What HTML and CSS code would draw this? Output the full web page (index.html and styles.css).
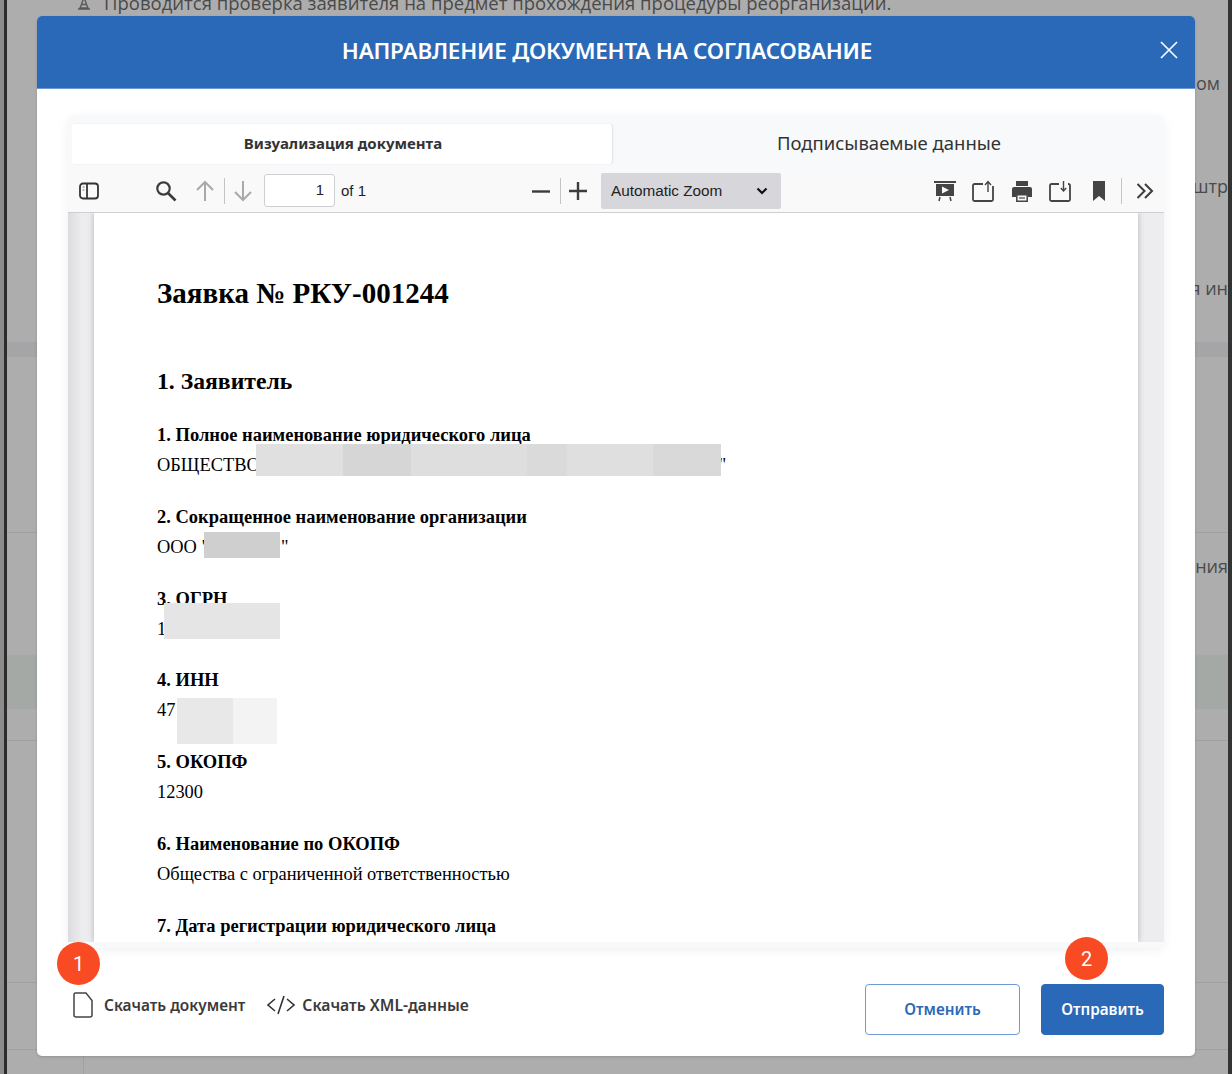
FILE: index.html
```html
<!DOCTYPE html>
<html lang="ru">
<head>
    <meta charset="UTF-8">
    <title>Направление документа на согласование</title>
    <link rel="stylesheet" href="styles.css">
</head>
<body>

    <!-- Страница под модальным окном -->
    <div class="backdrop">
        <div class="notice">
            <svg class="notice-icon" viewBox="0 0 16 16" width="16" height="16"><path d="M4 14h8l-1.500-3.500h-5zM5.500 10.500L8 3l2.500 7.500M2 15h12" fill="none" stroke="#5a5a5a" stroke-width="1.400"/></svg>
            <span>Проводится проверка заявителя на предмет прохождения процедуры реорганизации.</span>
        </div>
        <div class="bg-row bg-row-1">ом</div>
        <div class="bg-row bg-row-2">штр</div>
        <div class="bg-row bg-row-3">я ин</div>
        <div class="bg-band"></div>
        <div class="bg-row bg-row-4">ния</div>
        <div class="bg-green"></div>
        <div class="bg-line bg-line-1"></div>
        <div class="bg-line bg-line-2"></div>
        <div class="bg-line bg-line-3"></div>
        <div class="bg-foot"></div>
    </div>

    <div class="modal">
        <div class="modal-header">
            <h1>НАПРАВЛЕНИЕ ДОКУМЕНТА НА СОГЛАСОВАНИЕ</h1>
            <svg class="close-icon" viewBox="0 0 18 18" width="18" height="18"><path d="M1 1l16 16M17 1L1 17" stroke="#fff" stroke-width="1.700" fill="none"/></svg>
        </div>

        <div class="viewer-card">
            <div class="tabs">
                <div class="tab tab-active">Визуализация документа</div>
                <div class="tab">Подписываемые данные</div>
            </div>

            <div class="toolbar">
                <svg class="tool tool-sidebar" viewBox="0 0 20 18" width="20" height="18"><rect x="1" y="1.500" width="18" height="15" rx="3" fill="none" stroke="#333" stroke-width="1.800"/><path d="M8 1.500v15" stroke="#333" stroke-width="1.800"/><path d="M3.500 5h2M3.500 8h2" stroke="#777" stroke-width="1.200"/></svg>
                <svg class="tool tool-search" viewBox="0 0 22 22" width="22" height="22"><circle cx="8.500" cy="8.500" r="6.200" fill="none" stroke="#3c3c3c" stroke-width="2.200"/><path d="M13 13l7.500 7.500" stroke="#3c3c3c" stroke-width="2.600"/></svg>
                <svg class="tool tool-up" viewBox="0 0 20 22" width="20" height="22"><path d="M10 21V2M2 10l8-8 8 8" fill="none" stroke="#a9a9ab" stroke-width="2"/></svg>
                <span class="tool-sep sep-nav"></span>
                <svg class="tool tool-down" viewBox="0 0 20 22" width="20" height="22"><path d="M10 1v19M2 12l8 8 8-8" fill="none" stroke="#a9a9ab" stroke-width="2"/></svg>
                <div class="page-input">1</div>
                <span class="page-total">of 1</span>

                <svg class="tool tool-minus" viewBox="0 0 18 18" width="18" height="18"><path d="M0 9.500h18" stroke="#3c3c3c" stroke-width="2.400"/></svg>
                <span class="tool-sep sep-zoom"></span>
                <svg class="tool tool-plus" viewBox="0 0 18 18" width="18" height="18"><path d="M0 9h18M9 0v18" stroke="#3c3c3c" stroke-width="2.400"/></svg>
                <div class="zoom-select">
                    <span>Automatic Zoom</span>
                    <svg viewBox="0 0 12 8" width="12" height="8"><path d="M1.500 1.500L6 6l4.500-4.500" fill="none" stroke="#111" stroke-width="2.200"/></svg>
                </div>

                <svg class="tool tool-present" viewBox="0 0 22 22" width="22" height="22"><path d="M0 2h22" stroke="#444" stroke-width="2"/><path d="M2 4h18v12H2z" fill="#444"/><path d="M8 6.500l7 3.500-7 3.500z" fill="#f9f9fa"/><path d="M6 17l-1 4M16 17l1 4" stroke="#444" stroke-width="1.500"/></svg>
                <svg class="tool tool-open" viewBox="0 0 22 22" width="22" height="22"><path d="M11 4H2.500A1.500 1.500 0 0 0 1 5.500v14A1.500 1.500 0 0 0 2.500 21h17a1.500 1.500 0 0 0 1.500-1.500V6" fill="none" stroke="#444" stroke-width="1.800"/><path d="M16 12V2M13 5l3-3.500L19 5" fill="none" stroke="#444" stroke-width="1.400"/></svg>
                <svg class="tool tool-print" viewBox="0 0 22 22" width="22" height="22"><path d="M5 6V1h12v5M5 17H1V9a2 2 0 0 1 2-2h16a2 2 0 0 1 2 2v8h-4v-3H5z" fill="#444"/><path d="M5.800 14.800h10.400v6.400H5.800z" fill="none" stroke="#444" stroke-width="1.500"/><path d="M8 18h6" stroke="#444" stroke-width="1.200"/></svg>
                <svg class="tool tool-save" viewBox="0 0 22 22" width="22" height="22"><path d="M10 4H2.500A1.500 1.500 0 0 0 1 5.500v14A1.500 1.500 0 0 0 2.500 21h17a1.500 1.500 0 0 0 1.500-1.500V5.500A1.500 1.500 0 0 0 19.500 4H19" fill="none" stroke="#444" stroke-width="1.800"/><path d="M14.500 1v10M11.800 8l2.700 3 2.700-3" fill="none" stroke="#444" stroke-width="1.400"/></svg>
                <svg class="tool tool-mark" viewBox="0 0 12 20" width="12" height="20"><path d="M0 0h12v20l-6-5-6 5z" fill="#444"/></svg>
                <span class="tool-sep sep-more"></span>
                <svg class="tool tool-more" viewBox="0 0 18 16" width="18" height="16"><path d="M1.500 1l7 7-7 7M9 1l7 7-7 7" fill="none" stroke="#3c3c3c" stroke-width="2"/></svg>
            </div>

            <div class="viewer-body">
                <div class="doc-page">
                    <h2>Заявка № РКУ-001244</h2>
                    <h3>1. Заявитель</h3>
                    <div class="field"><b>1. Полное наименование юридического лица</b><p>ОБЩЕСТВО<span class="gap gap-name"></span>"</p></div>
                    <div class="field"><b>2. Сокращенное наименование организации</b><p>ООО "<span class="gap gap-short"></span>"</p></div>
                    <div class="field"><b>3. ОГРН</b><p>1</p></div>
                    <div class="field"><b>4. ИНН</b><p>47</p></div>
                    <div class="field"><b>5. ОКОПФ</b><p>12300</p></div>
                    <div class="field"><b>6. Наименование по ОКОПФ</b><p>Общества с ограниченной ответственностью</p></div>
                    <div class="field"><b>7. Дата регистрации юридического лица</b></div>

                    <!-- Закрашенные данные -->
                    <div class="mask mask-name">
                        <i class="m1"></i><i class="m2"></i><i class="m3"></i><i class="m4"></i><i class="m5"></i><i class="m6"></i>
                    </div>
                    <div class="mask mask-short"></div>
                    <div class="mask mask-ogrn"></div>
                    <div class="mask mask-inn"><i class="m7"></i><i class="m8"></i></div>
                </div>
            </div>
        </div>

        <div class="modal-footer">
            <a class="link">
                <svg viewBox="0 0 20 26" width="20" height="26"><path d="M2.500 1H13l6 7.500V23a2 2 0 0 1-2 2H3a2 2 0 0 1-2-2V2.500A1.500 1.500 0 0 1 2.500 1z" fill="none" stroke="#444" stroke-width="1.500"/></svg>
                Скачать документ
            </a>
            <a class="link link-xml">
                <svg viewBox="0 0 28 20" width="28" height="20"><path d="M8 4l-7 6 7 6M20 4l7 6-7 6M11 19l6-18" fill="none" stroke="#333" stroke-width="1.600"/></svg>
                Скачать XML-данные
            </a>
            <button class="btn btn-cancel">Отменить</button>
            <button class="btn btn-send">Отправить</button>
        </div>

        <div class="badge badge-one">1</div>
        <div class="badge badge-two">2</div>
    </div>

</body>
</html>
```
FILE: styles.css
```css
/* Общее */
html, body {
    margin: 0;
    height: 1074px;
    overflow: hidden;
}

body {
    background: #8c8c8c;
    font-family: "Open Sans", sans-serif;
}

/* Страница под окном */
.backdrop {
    height: 1074px;
    margin-left: 4px;
    box-sizing: border-box;
    overflow: hidden;
    border-left: 3px solid #2c2c2c;
    border-right: 4px solid #333;
    background: #adadad;
    color: #4a4a4a;
}

.notice {
    display: flex;
    align-items: center;
    gap: 12px;
    height: 16px;
    margin-top: -6px;
    padding-left: 69px;
    font-size: 18.500px;
    white-space: nowrap;
}

.notice-icon {
    flex: none;
}

.bg-row {
    text-align: right;
    font-size: 18px;
    line-height: 24px;
    white-space: nowrap;
}

.bg-row-1 { margin-top: 61px; padding-right: 8px; }
.bg-row-2 { margin-top: 79px; }
.bg-row-3 { margin-top: 78px; }
.bg-row-4 { margin-top: 22px; border-top: 1px solid #a0a0a0; padding-top: 21px; }

.bg-band {
    height: 15px;
    margin-top: 42px;
    margin-bottom: 175px;
    background: #a5a5a7;
}

.bg-green {
    height: 54px;
    margin-top: 77px;
    background: #a4a9a6;
}

.bg-line {
    height: 1px;
    background: #a0a0a0;
}

.bg-line-1 { margin-top: 31px; }
.bg-line-2 { margin-top: 241px; }
.bg-line-3 { margin-top: 66px; }

.bg-foot {
    height: 30px;
    margin-left: 76px;
    border-left: 1px solid #a0a0a0;
}

/* Модальное окно */
.modal {
    position: absolute;
    top: 16px;
    left: 37px;
    width: 1158px;
    height: 1040px;
    display: flex;
    flex-direction: column;
    background: #fff;
    border-radius: 5px;
    box-shadow: 0 1px 3px rgba(0, 0, 0, 0.15);
}

.modal-header {
    position: relative;
    flex: none;
    height: 73px;
    padding-right: 18px;
    display: flex;
    align-items: center;
    justify-content: center;
    background: #2a69b8;
    border-radius: 5px 5px 0 0;
    border-bottom: 1px solid #6b9ad6;
    box-sizing: border-box;
}

.modal-header h1 {
    margin: 0;
    color: #fff;
    font-family: "Noto Sans", sans-serif;
    font-size: 22.400px;
    font-weight: 600;
    letter-spacing: -0.200px;
    transform: translateY(-2px);
}

.close-icon {
    position: absolute;
    top: 25px;
    right: 17px;
}

/* Просмотр документа */
.viewer-card {
    flex: none;
    width: 1096px;
    height: 832px;
    margin: 27px 0 0 31px;
    background: #f8f9fb;
    border-radius: 6px;
    box-shadow: 0 2px 12px rgba(0, 0, 0, 0.06);
    display: flex;
    flex-direction: column;
}

.tabs {
    flex: none;
    display: flex;
    height: 40px;
    margin-top: 8px;
    padding-left: 4px;
}

.tab {
    flex: 1;
    display: flex;
    align-items: center;
    justify-content: center;
    padding: 0 0 3px 2px;
    color: #333;
    font-family: "Noto Sans", sans-serif;
    font-size: 18.500px;
}

.tab-active {
    flex: none;
    width: 540px;
    background: #fff;
    border-radius: 3px;
    box-shadow: 1px 0 2px rgba(0, 0, 0, 0.1);
    box-sizing: border-box;
    font-size: 15px;
    font-weight: 700;
}

.toolbar {
    flex: none;
    height: 44px;
    margin-top: 5px;
    box-sizing: border-box;
    display: flex;
    align-items: center;
    background: #f9f9fa;
    border-bottom: 1px solid #cfcfd1;
    font-family: "Liberation Sans", Arial, sans-serif;
    font-size: 15px;
    color: #222;
}

.tool {
    flex: none;
}

.tool-sep {
    flex: none;
    width: 1px;
    height: 26px;
    background: #c4c4c6;
}

.tool-sidebar { margin-left: 11px; }
.tool-search { margin-left: 56px; }
.tool-up { margin-left: 18px; }
.sep-nav { margin-left: 9px; }
.tool-down { margin-left: 8px; }

.page-input {
    width: 71px;
    height: 33px;
    margin-left: 11px;
    padding-right: 10px;
    box-sizing: border-box;
    background: #fff;
    border: 1px solid #cfcfd1;
    border-radius: 3px;
    text-align: right;
    line-height: 30px;
}

.page-total {
    width: 30px;
    margin-left: 6px;
}

.tool-minus { margin-left: 161px; }
.sep-zoom { margin-left: 10px; }
.tool-plus { margin-left: 8px; }

.zoom-select {
    width: 180px;
    height: 36px;
    margin-left: 14px;
    padding: 0 13px 0 10px;
    box-sizing: border-box;
    display: flex;
    align-items: center;
    justify-content: space-between;
    background: #d7d7db;
    border-radius: 2px;
    font-size: 15.300px;
}

.tool-present { margin-left: 153px; }
.tool-open { margin-left: 16px; }
.tool-print { margin-left: 17px; }
.tool-save { margin-left: 16px; }
.tool-mark { margin-left: 22px; }
.sep-more { margin-left: 16px; }
.tool-more { margin-left: 14px; }

.viewer-body {
    flex: none;
    height: 729px;
    padding: 0 26px;
    overflow: hidden;
    background: linear-gradient(90deg, #dcdcde, #ededf0 14px);
}

/* Страница PDF */
.doc-page {
    position: relative;
    height: 729px;
    padding: 62px 0 0 63px;
    box-sizing: border-box;
    overflow: hidden;
    background: #fff;
    color: #000;
    font-family: "Liberation Serif", "Times New Roman", serif;
    font-size: 18.400px;
    box-shadow: 0 0 6px rgba(0, 0, 0, 0.25);
}

.doc-page h2 {
    margin: 0 0 55px;
    font-size: 29px;
    line-height: 36px;
}

.doc-page h3 {
    margin: 0 0 24px;
    font-size: 23.700px;
    line-height: 30px;
}

.field {
    height: 81.800px;
    line-height: 30px;
}

.field b {
    display: block;
    font-size: 18.500px;
}

.field p {
    margin: 0;
}

.gap {
    display: inline-block;
}

.gap-name { width: 459px; }
.gap-short { width: 72px; }

/* Закрашенные места */
.mask {
    position: absolute;
    display: flex;
}

.mask i {
    display: block;
}

.mask-name { left: 162px; top: 231px; width: 465px; height: 32px; }
.mask-short { left: 110px; top: 319px; width: 76px; height: 26px; background: #cfcfcf; }
.mask-ogrn { left: 70px; top: 390px; width: 116px; height: 36px; background: #e5e5e5; }
.mask-inn { left: 83px; top: 485px; width: 100px; height: 46px; }

.m1 { width: 87px; background: #e0e0e0; }
.m2 { width: 68px; background: #d6d6d6; }
.m3 { width: 116px; background: #dedede; }
.m4 { width: 40px; background: #dadada; }
.m5 { width: 86px; background: #dfdfdf; }
.m6 { width: 68px; background: #d9d9d9; }
.m7 { width: 56px; background: #e8e8e8; }
.m8 { width: 44px; background: #f3f3f3; }

/* Подвал окна */
.modal-footer {
    flex: 1;
    display: flex;
    align-items: flex-start;
    padding: 36px 31px 0 36px;
}

.link {
    display: flex;
    align-items: center;
    gap: 11px;
    height: 26px;
    margin-top: 8px;
    color: #3a3a3a;
    font-family: "Noto Sans", sans-serif;
    font-size: 15.400px;
    font-weight: 600;
    white-space: nowrap;
}

.link-xml {
    gap: 7px;
    margin-left: 22px;
    font-size: 15.700px;
}

.btn {
    height: 51px;
    padding: 0 0 2px;
    border-radius: 4px;
    font-family: "Noto Sans", sans-serif;
    font-size: 15.300px;
    font-weight: 600;
}

.btn-cancel {
    width: 155px;
    margin-left: auto;
    background: #fff;
    color: #2a69b8;
    border: 1px solid #6c9bd6;
}

.btn-send {
    width: 123px;
    margin-left: 21px;
    background: #2a69b8;
    color: #fff;
    border: 1px solid #2a69b8;
}

/* Номера шагов */
.badge {
    position: absolute;
    width: 43px;
    height: 43px;
    display: flex;
    align-items: center;
    justify-content: center;
    background: #f84a23;
    border-radius: 50%;
    color: #fff;
    font-family: "Roboto", sans-serif;
    font-size: 20px;
}

.badge-one { left: 20px; top: 926px; }
.badge-two { left: 1028px; top: 921px; }
```
